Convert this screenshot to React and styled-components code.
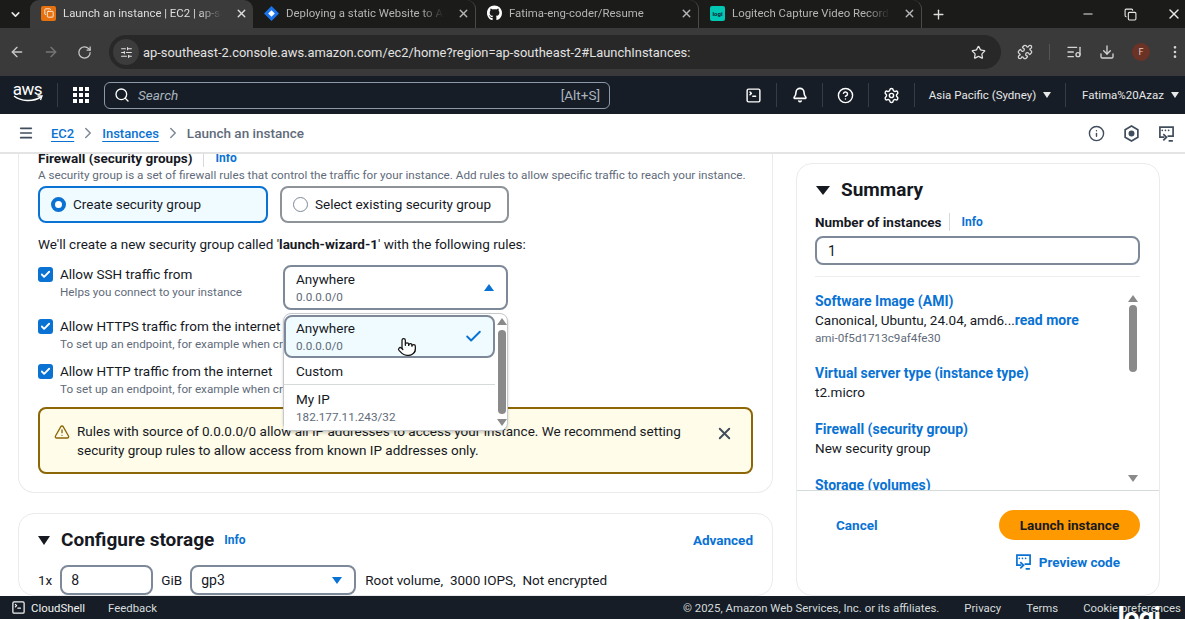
import React from "react";
import styled, { createGlobalStyle } from "styled-components";
import {
  ArrowLeft,
  ArrowRight,
  RotateCw,
  Star,
  Puzzle,
  Download,
  EllipsisVertical,
  Search,
  Bell,
  CircleHelp,
  Settings,
  Info as InfoIcon,
  X,
  Plus,
  Minus,
  Copy,
  ListMusic,
  Check,
  TriangleAlert,
  Menu,
  SquareTerminal,
  Pointer,
  ChevronDown,
  ChevronRight,
  SlidersHorizontal,
} from "lucide-react";
import { FaGithub } from "react-icons/fa";

const GlobalStyle = createGlobalStyle`
  html, body {
    margin: 0;
    height: 100%;
    overflow: hidden;
    background: #fff;
  }
  * { box-sizing: border-box; }
  body {
    font-family: Roboto, "Noto Sans", sans-serif;
    font-size: 13.5px;
    color: #16191f;
  }
`;

const Page = styled.div`
  height: 100vh;
  display: flex;
  flex-direction: column;
  position: relative;
  overflow: hidden;
`;

/* browser chrome */
const TabStrip = styled.div`
  height: 28px;
  flex: none;
  background: #1b1b1a;
  display: flex;
  align-items: stretch;
  color: #c7c7c7;
`;
const TabMenu = styled.div`
  width: 30px;
  display: flex;
  align-items: center;
  justify-content: center;
  color: #e6e6e6;
`;
const Tab = styled.div`
  width: 223px;
  display: flex;
  align-items: center;
  padding: 0 5px 2px 11px;
  gap: 7px;
  font-size: 11.4px;
  white-space: nowrap;
  border-radius: 9px 9px 0 0;
  background: ${(p) => (p.$active ? "#3b3b3b" : "transparent")};
  color: ${(p) => (p.$active ? "#dedede" : "#b5b5b5")};
  border-right: ${(p) => (p.$divider ? "1px solid #4a4a4a" : "none")};
`;
const TabTitle = styled.span`
  flex: 1;
  overflow: hidden;
  margin-right: 6px;
  -webkit-mask-image: linear-gradient(to right, #000 85%, transparent);
  mask-image: linear-gradient(to right, #000 85%, transparent);
`;
const Favicon = styled.span`
  width: 15px;
  height: 15px;
  flex: none;
  display: flex;
  align-items: center;
  justify-content: center;
  border-radius: 2px;
  background: ${(p) => p.$bg || "transparent"};
  color: ${(p) => p.$color || "#fff"};
  font-size: 6px;
  font-weight: 700;
`;
const NewTab = styled.div`
  width: 32px;
  display: flex;
  align-items: center;
  color: #dcdcdc;
  padding-left: 9px;
`;
const WindowButtons = styled.div`
  margin-left: auto;
  display: flex;
  align-items: center;
  gap: 29px;
  padding-right: 3px;
  color: #eaeaea;
`;
const Toolbar = styled.div`
  height: 48px;
  flex: none;
  background: #3a3a3a;
  display: flex;
  align-items: center;
  padding-left: 9px;
  color: #c9c9c9;
`;
const NavIcons = styled.div`
  display: flex;
  align-items: center;
  gap: 18px;
  width: 100px;
`;
const AddressBar = styled.div`
  width: 892px;
  height: 34px;
  border-radius: 17px;
  background: #282828;
  display: flex;
  align-items: center;
  padding: 0 15px 0 4px;
  color: #e2e2e2;
  font-size: 12.9px;
`;
const SiteInfo = styled.span`
  width: 26px;
  height: 26px;
  border-radius: 50%;
  background: #3c3c3c;
  display: flex;
  align-items: center;
  justify-content: center;
  margin-right: 4px;
`;
const Url = styled.span`
  flex: 1;
  white-space: nowrap;
`;
const ToolIcons = styled.div`
  display: flex;
  align-items: center;
  gap: 17px;
  margin-left: 16px;
  color: #d4d4d4;
`;
const ToolDivider = styled.span`
  width: 1px;
  height: 16px;
  background: #555;
  margin: 0 -1px;
`;
const Avatar = styled.span`
  width: 18px;
  height: 18px;
  border-radius: 50%;
  background: #6b3226;
  color: #e6c9c0;
  font-size: 9px;
  display: flex;
  align-items: center;
  justify-content: center;
`;

/* aws nav */
const TopNav = styled.div`
  height: 38px;
  flex: none;
  background: #161d26;
  display: flex;
  align-items: center;
  color: #e8e8e8;
  font-size: 11.5px;
  padding-left: 12px;
`;
const Logo = styled.div`
  width: 31px;
  display: flex;
  flex-direction: column;
  align-items: center;
  line-height: 12px;
  font-size: 17px;
  letter-spacing: -0.5px;
  color: #fff;
  height: 24px;
`;
const NavSep = styled.span`
  width: 1px;
  height: 24px;
  margin-left: 14px;
  background: #333c48;
`;
const GridIcon = styled.div`
  display: grid;
  grid-template-columns: repeat(3, 4px);
  gap: 2px;
  margin: 0 15px;
  span {
    width: 4px;
    height: 4px;
    background: #fff;
  }
`;
const SearchBox = styled.div`
  width: 506px;
  height: 27px;
  border: 1px solid #8d99a8;
  border-radius: 6px;
  display: flex;
  align-items: center;
  gap: 8px;
  padding: 0 9px 0 9px;
  font-size: 13.5px;
  color: #aab4bf;
`;
const SearchText = styled.span`
  flex: 1;
  font-style: italic;
`;
const NavItem = styled.div`
  display: flex;
  align-items: center;
  justify-content: center;
  height: 24px;
  width: ${(p) => p.$w}px;
  gap: 7px;
  white-space: nowrap;
  padding-left: ${(p) => (p.$last ? 10 : 0)}px;
  border-right: ${(p) => (p.$last ? "none" : "1px solid #333c48")};
`;
const NavIcons2 = styled.div`
  margin-left: 121px;
  display: flex;
  align-items: center;
`;
const Caret = styled.span`
  width: 0;
  height: 0;
  border-left: 4px solid transparent;
  border-right: 4px solid transparent;
  border-top: 6px solid currentColor;
`;

/* breadcrumb */
const Crumbs = styled.div`
  height: 40px;
  flex: none;
  border-bottom: 2px solid #e4e4e4;
  display: flex;
  align-items: center;
  padding: 0 10px 0 18px;
  font-size: 13.5px;
  font-weight: 500;
  color: #5f6b7a;
`;
const CrumbLink = styled.a`
  color: #0972d3;
  font-size: 13px;
  text-decoration: underline;
  text-underline-offset: 3px;
`;
const CrumbArrow = styled.span`
  display: flex;
  color: #7d8998;
  margin: 0 5px;
`;
const CrumbIcons = styled.div`
  margin-left: auto;
  display: flex;
  align-items: center;
  gap: 18px;
  color: #414d5c;
`;

/* main content */
const Workspace = styled.div`
  flex: 1;
  min-height: 0;
  display: flex;
  gap: 23px;
  padding-left: 18px;
  overflow: hidden;
`;
const Column = styled.div`
  width: 755px;
  flex: none;
  min-height: 0;
  display: flex;
  flex-direction: column;
  gap: 20px;
  margin-top: -5px;
`;
const Card = styled.section`
  background: #fff;
  border: 1px solid #e9ebed;
  border-radius: 16px;
  padding: ${(p) => p.$pad || "0 19px"};
  flex: none;
`;
const FirewallCard = styled(Card)`
  border-top: none;
  border-radius: 0 0 16px 16px;
  height: 344px;
`;
const FieldTitle = styled.div`
  display: flex;
  align-items: center;
  font-weight: 700;
  font-size: 13.5px;
  line-height: 18px;
`;
const InfoLink = styled.a`
  color: #0972d3;
  font-weight: 700;
  font-size: 12px;
  margin-left: ${(p) => p.$gap ?? 10}px;
  padding-left: ${(p) => (p.$bar ? 11 : 0)}px;
  border-left: ${(p) => (p.$bar ? "1px solid #d5dbdb" : "none")};
`;
const Desc = styled.div`
  font-size: 11.7px;
  color: #5f6b7a;
  line-height: 16px;
  white-space: nowrap;
`;
const Tiles = styled.div`
  display: flex;
  gap: 12px;
  margin-top: 3px;
`;
const Tile = styled.div`
  width: ${(p) => p.$w}px;
  height: 37px;
  border-radius: 8px;
  border: 2px solid ${(p) => (p.$on ? "#0972d3" : "#8d9399")};
  background: ${(p) => (p.$on ? "#f0fbff" : "#fff")};
  display: flex;
  align-items: center;
  gap: 7px;
  padding: 0 0 1px 11px;
`;
const Radio = styled.span`
  width: 15px;
  height: 15px;
  border-radius: 50%;
  background: #fff;
  border: ${(p) => (p.$on ? "4.5px solid #0972d3" : "1.5px solid #7d8998")};
`;
const Lead = styled.div`
  margin-top: 11px;
  line-height: 20px;
  b {
    font-weight: 700;
  }
`;
const RuleRow = styled.div`
  display: flex;
  gap: 7px;
  margin-top: ${(p) => p.$top || 0}px;
  height: ${(p) => p.$h || 36}px;
`;
const CheckBox = styled.span`
  width: 15px;
  height: 15px;
  flex: none;
  margin-top: 3px;
  border-radius: 3px;
  background: #0972d3;
  color: #fff;
  display: flex;
  align-items: center;
  justify-content: center;
`;
const RuleText = styled.div`
  width: 216px;
  white-space: nowrap;
  line-height: 20px;
`;
const SelectWrap = styled.div`
  position: relative;
  width: 225px;
  margin-top: 1px;
  flex: none;
`;
const SelectBox = styled.div`
  height: 45px;
  border: 2px solid #7d8998;
  border-radius: 8px;
  padding: 3px 12px 3px 11px;
  line-height: 19px;
  display: flex;
  align-items: center;
  justify-content: space-between;
`;
const OptionSub = styled.div`
  font-size: 11.7px;
  line-height: 17px;
  color: #5f6b7a;
`;
const Triangle = styled.span`
  width: 0;
  height: 0;
  border-left: ${(p) => p.$size || 5}px solid transparent;
  border-right: ${(p) => p.$size || 5}px solid transparent;
  ${(p) => (p.$up ? "border-bottom" : "border-top")}: ${(p) => (p.$size || 5) * 1.4}px solid
    ${(p) => p.$color || "#0972d3"};
`;
const Menu_ = styled.div`
  position: absolute;
  z-index: 5;
  top: 48px;
  left: 0;
  width: 225px;
  height: 118px;
  background: #fff;
  border: 1px solid #c6c9cc;
  border-radius: 8px;
  display: flex;
  box-shadow: 0 2px 3px rgba(0, 0, 0, 0.18);
  padding: 1px 1px 1px 0;
`;
const MenuList = styled.div`
  width: 211px;
  flex: none;
`;
const Option = styled.div`
  padding: ${(p) => p.$pad || "3px 12px"};
  line-height: 19px;
  height: ${(p) => p.$h}px;
  display: flex;
  align-items: center;
  justify-content: space-between;
  border-radius: ${(p) => (p.$on ? "8px" : "0")};
  background: ${(p) => (p.$on ? "#f0fbff" : "#fff")};
  border: ${(p) => (p.$on ? "2px solid #7d8998" : "none")};
  border-bottom: ${(p) => (p.$line ? "1px solid #d5dbdb" : "")};
`;
const ScrollTrack = styled.div`
  flex: 1;
  display: flex;
  flex-direction: column;
  align-items: center;
  justify-content: space-between;
  padding: 3px 0;
  margin-left: 2px;
`;
const ScrollThumb = styled.div`
  width: ${(p) => p.$w || 8}px;
  height: ${(p) => p.$h}px;
  margin-top: ${(p) => p.$top || 0}px;
  border-radius: 4px;
  background: #8a8a8a;
`;
const CursorSpot = styled.span`
  position: absolute;
  left: 113px;
  top: 23px;
  display: flex;
  color: #111;
  filter: drop-shadow(0 0 0.5px #fff);
`;
const Alert = styled.div`
  height: 67px;
  margin-top: 1px;
  border: 2px solid #8d6605;
  border-radius: 8px;
  background: #fffce9;
  display: flex;
  align-items: flex-start;
  padding: 13px 17px 0 14px;
  gap: 7px;
  line-height: 19px;
`;
const AlertIcon = styled.span`
  display: flex;
  margin-top: 2px;
  color: #8d6605;
`;
const AlertText = styled.div`
  width: 620px;
`;
const AlertClose = styled.span`
  margin-left: auto;
  display: flex;
  margin-top: 2px;
  color: #414d5c;
`;
const StorageHead = styled.div`
  display: flex;
  align-items: center;
  height: 26px;
  gap: 10px;
  margin-bottom: 12px;
`;
const H2 = styled.h2`
  margin: 0;
  font-size: 19px;
  font-weight: 700;
  line-height: 26px;
  margin-left: ${(p) => p.$gap || 0}px;
`;
const Advanced = styled.a`
  margin-left: auto;
  color: #0972d3;
  font-weight: 700;
  font-size: 13.5px;
`;
const StorageRow = styled.div`
  display: flex;
  align-items: center;
  gap: 8px;
`;
const Field = styled.div`
  height: ${(p) => p.$h || 30}px;
  width: ${(p) => p.$w};
  border: 2px solid #7d8998;
  border-radius: 8px;
  display: flex;
  align-items: center;
  justify-content: space-between;
  padding: 0 12px 0 9px;
  font-size: 14px;
`;
const StorageNote = styled.span`
  margin-left: 1px;
`;

/* summary */
const SummaryCard = styled(Card)`
  width: 364px;
  margin-top: 9px;
  height: 433px;
  padding: 0;
  display: flex;
  flex-direction: column;
`;
const SummaryTop = styled.div`
  padding: 13px 19px 0 18px;
  margin-bottom: 11px;
`;
const SummaryHead = styled.div`
  display: flex;
  align-items: center;
  gap: 11px;
  height: 26px;
  margin-bottom: 10px;
  padding-left: 1px;
`;
const NumberInput = styled(Field)`
  margin-top: 5px;
  height: 29px;
  padding-left: 11px;
`;
const TopLine = styled.div`
  height: 1px;
  background: #eceeef;
  margin-top: 11px;
`;
const SummaryScroll = styled.div`
  flex: 1;
  min-height: 0;
  padding: 4px 0 0 18px;
  display: flex;
  overflow: hidden;
`;
const SummaryList = styled.div`
  width: 306px;
  flex: none;
`;
const SummaryItem = styled.div`
  margin-bottom: 18px;
  line-height: 19px;
`;
const BlueLabel = styled.a`
  color: #0972d3;
  font-weight: 700;
  font-size: 14px;
  display: block;
`;
const ReadMore = styled.a`
  color: #0972d3;
  font-weight: 700;
  font-size: 14px;
`;
const SummaryBar = styled.div`
  width: 18px;
  margin: 3px 0 0 3px;
  display: flex;
  flex-direction: column;
  align-items: center;
  height: 187px;
`;
const BarSpacer = styled.span`
  flex: 1;
`;
const SummaryActions = styled.div`
  border-top: 1px solid #d5dbdb;
  height: 105px;
  flex: none;
  padding: 19px 19px 0 39px;
`;
const ActionRow = styled.div`
  display: flex;
  align-items: center;
  justify-content: space-between;
`;
const LinkButton = styled.a`
  color: #0972d3;
  font-weight: 700;
  font-size: 13.5px;
  display: flex;
  align-items: center;
  gap: 7px;
`;
const Launch = styled.button`
  width: 141px;
  height: 30px;
  border: none;
  border-radius: 15px;
  background: #ff9900;
  color: #16191f;
  font: inherit;
  font-weight: 700;
  font-size: 13.5px;
`;
const PreviewRow = styled.div`
  display: flex;
  justify-content: flex-end;
  padding-right: 20px;
  margin-top: 13px;
`;

/* footer */
const Footer = styled.div`
  height: 23px;
  flex: none;
  background: #161d26;
  color: #d5dbdb;
  font-size: 11.4px;
  display: flex;
  align-items: center;
  padding-left: 11px;
  white-space: nowrap;
`;
const FootShell = styled.div`
  display: flex;
  align-items: center;
  gap: 5px;
  margin-right: 23px;
  color: #f2f3f3;
`;
const FootRight = styled.div`
  margin-left: auto;
  display: flex;
  gap: 25px;
  margin-right: 4px;
`;
const Watermark = styled.span`
  position: absolute;
  right: 25px;
  bottom: -14px;
  font-size: 28px;
  font-weight: 700;
  color: #fff;
  letter-spacing: -1px;
  line-height: 30px;
`;

const PreviewIcon = ({ size = 17 }) => (
  <svg width={size} height={size} viewBox="0 0 16 16" fill="none" stroke="currentColor" strokeWidth="1.6">
    <path d="M6 11.5H1.8V2h12.4v8.5H9" />
    <path d="M4 5h.01M7 5h.01M10 5h.01" strokeLinecap="round" />
    <path d="M5 8.5l3 3-3 3M10 15h4" />
  </svg>
);

const HexIcon = () => (
  <svg width="17" height="17" viewBox="0 0 16 16" fill="none" stroke="currentColor" strokeWidth="1.6">
    <path d="M8 1l6 3.4v7.2L8 15l-6-3.4V4.4z" />
    <circle cx="8" cy="8" r="2" fill="currentColor" />
  </svg>
);

const DiamondIcon = () => (
  <svg width="15" height="15" viewBox="0 0 16 16">
    <path d="M8 0l8 8-8 8-8-8z" fill="#1a73e8" />
    <rect x="5.5" y="5.5" width="5" height="5" fill="#fff" transform="rotate(45 8 8)" />
  </svg>
);

const Smile = () => (
  <svg width="30" height="8" viewBox="0 0 30 8" fill="none">
    <path d="M1 1c7 5.5 19 6 27 1" stroke="#fff" strokeWidth="1.5" />
    <path d="M24.5 1H29l-1.5 4" stroke="#fff" strokeWidth="1.3" />
  </svg>
);

export default function App() {
  return (
    <Page>
      <GlobalStyle />
      <TabStrip>
        <TabMenu>
          <ChevronDown size={13} strokeWidth={3} />
        </TabMenu>
        <Tab $active>
          <Favicon $bg="#e8710f">
            <Copy size={10} strokeWidth={2} />
          </Favicon>
          <TabTitle>Launch an instance | EC2 | ap-southeast-2</TabTitle>
          <X size={13} strokeWidth={2.5} />
        </Tab>
        <Tab $divider>
          <Favicon>
            <DiamondIcon />
          </Favicon>
          <TabTitle>Deploying a static Website to AWS</TabTitle>
          <X size={13} strokeWidth={2.5} />
        </Tab>
        <Tab $divider>
          <Favicon>
            <FaGithub size={16} />
          </Favicon>
          <TabTitle>Fatima-eng-coder/Resume</TabTitle>
          <X size={13} strokeWidth={2.5} />
        </Tab>
        <Tab $divider>
          <Favicon $bg="#00c8b4" $color="#123">
            logi
          </Favicon>
          <TabTitle>Logitech Capture Video Recording</TabTitle>
          <X size={13} strokeWidth={2.5} />
        </Tab>
        <NewTab>
          <Plus size={15} strokeWidth={2.2} />
        </NewTab>
        <WindowButtons>
          <Minus size={14} />
          <Copy size={13} strokeWidth={2} />
          <X size={16} strokeWidth={2} />
        </WindowButtons>
      </TabStrip>

      <Toolbar>
        <NavIcons>
          <ArrowLeft size={16} />
          <ArrowRight size={16} color="#777" />
          <RotateCw size={15} />
        </NavIcons>
        <AddressBar>
          <SiteInfo>
            <SlidersHorizontal size={13} />
          </SiteInfo>
          <Url>ap-southeast-2.console.aws.amazon.com/ec2/home?region=ap-southeast-2#LaunchInstances:</Url>
          <Star size={15} strokeWidth={2} />
        </AddressBar>
        <ToolIcons>
          <Puzzle size={16} />
          <ToolDivider />
          <ListMusic size={16} />
          <Download size={16} />
          <Avatar>F</Avatar>
          <EllipsisVertical size={16} />
        </ToolIcons>
      </Toolbar>

      <TopNav>
        <Logo>
          aws
          <Smile />
        </Logo>
        <NavSep />
        <GridIcon>
          {Array.from({ length: 9 }).map((_, i) => (
            <span key={i} />
          ))}
        </GridIcon>
        <SearchBox>
          <Search size={16} color="#fff" />
          <SearchText>Search</SearchText>
          <span>[Alt+S]</span>
        </SearchBox>
        <NavIcons2>
          <NavItem $w={46}>
            <SquareTerminal size={17} color="#fff" />
          </NavItem>
          <NavItem $w={46}>
            <Bell size={16} color="#fff" strokeWidth={2.4} />
          </NavItem>
          <NavItem $w={46}>
            <CircleHelp size={17} color="#fff" />
          </NavItem>
          <NavItem $w={46}>
            <Settings size={17} color="#fff" />
          </NavItem>
          <NavItem $w={151}>
            Asia Pacific (Sydney) <Caret />
          </NavItem>
          <NavItem $w={119} $last>
            Fatima%20Azaz <Caret />
          </NavItem>
        </NavIcons2>
      </TopNav>

      <Crumbs>
        <Menu size={16} color="#414d5c" strokeWidth={2.5} style={{ marginRight: 17 }} />
        <CrumbLink>EC2</CrumbLink>
        <CrumbArrow>
          <ChevronRight size={18} />
        </CrumbArrow>
        <CrumbLink>Instances</CrumbLink>
        <CrumbArrow>
          <ChevronRight size={18} />
        </CrumbArrow>
        Launch an instance
        <CrumbIcons>
          <InfoIcon size={17} />
          <HexIcon />
          <PreviewIcon />
        </CrumbIcons>
      </Crumbs>

      <Workspace>
        <Column>
          <FirewallCard>
            <FieldTitle>
              Firewall (security groups)
              <InfoLink $bar $gap={11}>
                Info
              </InfoLink>
            </FieldTitle>
            <Desc>
              A security group is a set of firewall rules that control the traffic for your instance. Add rules to
              allow specific traffic to reach your instance.
            </Desc>
            <Tiles>
              <Tile $on $w={230}>
                <Radio $on />
                Create security group
              </Tile>
              <Tile $w={229}>
                <Radio />
                Select existing security group
              </Tile>
            </Tiles>
            <Lead>
              We'll create a new security group called '<b>launch-wizard-1</b>' with the following rules:
            </Lead>
            <RuleRow $top={10} $h={52}>
              <CheckBox>
                <Check size={11} strokeWidth={4} />
              </CheckBox>
              <RuleText>
                Allow SSH traffic from
                <Desc>Helps you connect to your instance</Desc>
              </RuleText>
              <SelectWrap>
                <SelectBox>
                  <div>
                    Anywhere
                    <OptionSub>0.0.0.0/0</OptionSub>
                  </div>
                  <Triangle $up />
                </SelectBox>
                <Menu_>
                  <MenuList>
                    <Option $on $h={43} $pad="3px 10px">
                      <div>
                        Anywhere
                        <OptionSub>0.0.0.0/0</OptionSub>
                      </div>
                      <Check size={19} color="#0972d3" strokeWidth={2.4} />
                    </Option>
                    <Option $h={27} $line>
                      Custom
                    </Option>
                    <Option $h={45}>
                      <div>
                        My IP
                        <OptionSub>182.177.11.243/32</OptionSub>
                      </div>
                    </Option>
                  </MenuList>
                  <ScrollTrack>
                    <Triangle $up $size={5} $color="#8a8a8a" />
                    <ScrollThumb $h={84} />
                    <Triangle $size={5} $color="#8a8a8a" />
                  </ScrollTrack>
                  <CursorSpot>
                    <Pointer size={20} strokeWidth={1.5} fill="#fff" />
                  </CursorSpot>
                </Menu_>
              </SelectWrap>
            </RuleRow>
            <RuleRow $h={45}>
              <CheckBox>
                <Check size={11} strokeWidth={4} />
              </CheckBox>
              <RuleText>
                Allow HTTPS traffic from the internet
                <Desc>To set up an endpoint, for example when creating a web server</Desc>
              </RuleText>
            </RuleRow>
            <RuleRow $h={45}>
              <CheckBox>
                <Check size={11} strokeWidth={4} />
              </CheckBox>
              <RuleText>
                Allow HTTP traffic from the internet
                <Desc>To set up an endpoint, for example when creating a web server</Desc>
              </RuleText>
            </RuleRow>
            <Alert>
              <AlertIcon>
                <TriangleAlert size={16} strokeWidth={2} />
              </AlertIcon>
              <AlertText>
                Rules with source of 0.0.0.0/0 allow all IP addresses to access your instance. We recommend setting
                security group rules to allow access from known IP addresses only.
              </AlertText>
              <AlertClose>
                <X size={19} strokeWidth={2.4} />
              </AlertClose>
            </Alert>
          </FirewallCard>

          <Card $pad="13px 19px 0">
            <StorageHead>
              <Triangle $size={6.5} $color="#16191f" />
              <H2 $gap={1}>Configure storage</H2>
              <InfoLink $gap={0}>Info</InfoLink>
              <Advanced>Advanced</Advanced>
            </StorageHead>
            <StorageRow>
              1x
              <Field $w="93px">8</Field>
              GiB
              <Field $w="166px">
                gp3
                <Triangle $size={5} />
              </Field>
              <StorageNote>Root volume,&nbsp; 3000 IOPS,&nbsp; Not encrypted</StorageNote>
            </StorageRow>
          </Card>
        </Column>

        <SummaryCard>
          <SummaryTop>
            <SummaryHead>
              <Triangle $size={7} $color="#16191f" />
              <H2>Summary</H2>
            </SummaryHead>
            <FieldTitle>
              Number of instances
              <InfoLink $bar $gap={8}>
                Info
              </InfoLink>
            </FieldTitle>
            <NumberInput $w="325px">1</NumberInput>
            <TopLine />
          </SummaryTop>
          <SummaryScroll>
            <SummaryList>
              <SummaryItem>
                <BlueLabel>Software Image (AMI)</BlueLabel>
                Canonical, Ubuntu, 24.04, amd6...<ReadMore>read more</ReadMore>
                <Desc>ami-0f5d1713c9af4fe30</Desc>
              </SummaryItem>
              <SummaryItem>
                <BlueLabel>Virtual server type (instance type)</BlueLabel>
                t2.micro
              </SummaryItem>
              <SummaryItem>
                <BlueLabel>Firewall (security group)</BlueLabel>
                New security group
              </SummaryItem>
              <SummaryItem>
                <BlueLabel>Storage (volumes)</BlueLabel>
              </SummaryItem>
            </SummaryList>
            <SummaryBar>
              <Triangle $up $size={5} $color="#8a8a8a" />
              <ScrollThumb $h={67} $top={3} />
              <BarSpacer />
              <Triangle $size={5} $color="#8a8a8a" />
            </SummaryBar>
          </SummaryScroll>
          <SummaryActions>
            <ActionRow>
              <LinkButton>Cancel</LinkButton>
              <Launch>Launch instance</Launch>
            </ActionRow>
            <PreviewRow>
              <LinkButton>
                <PreviewIcon /> Preview code
              </LinkButton>
            </PreviewRow>
          </SummaryActions>
        </SummaryCard>
      </Workspace>

      <Footer>
        <FootShell>
          <SquareTerminal size={15} />
          CloudShell
        </FootShell>
        Feedback
        <FootRight>
          <span>© 2025, Amazon Web Services, Inc. or its affiliates.</span>
          <span>Privacy</span>
          <span>Terms</span>
          <span>Cookie preferences</span>
        </FootRight>
      </Footer>
      <Watermark>logi</Watermark>
    </Page>
  );
}
